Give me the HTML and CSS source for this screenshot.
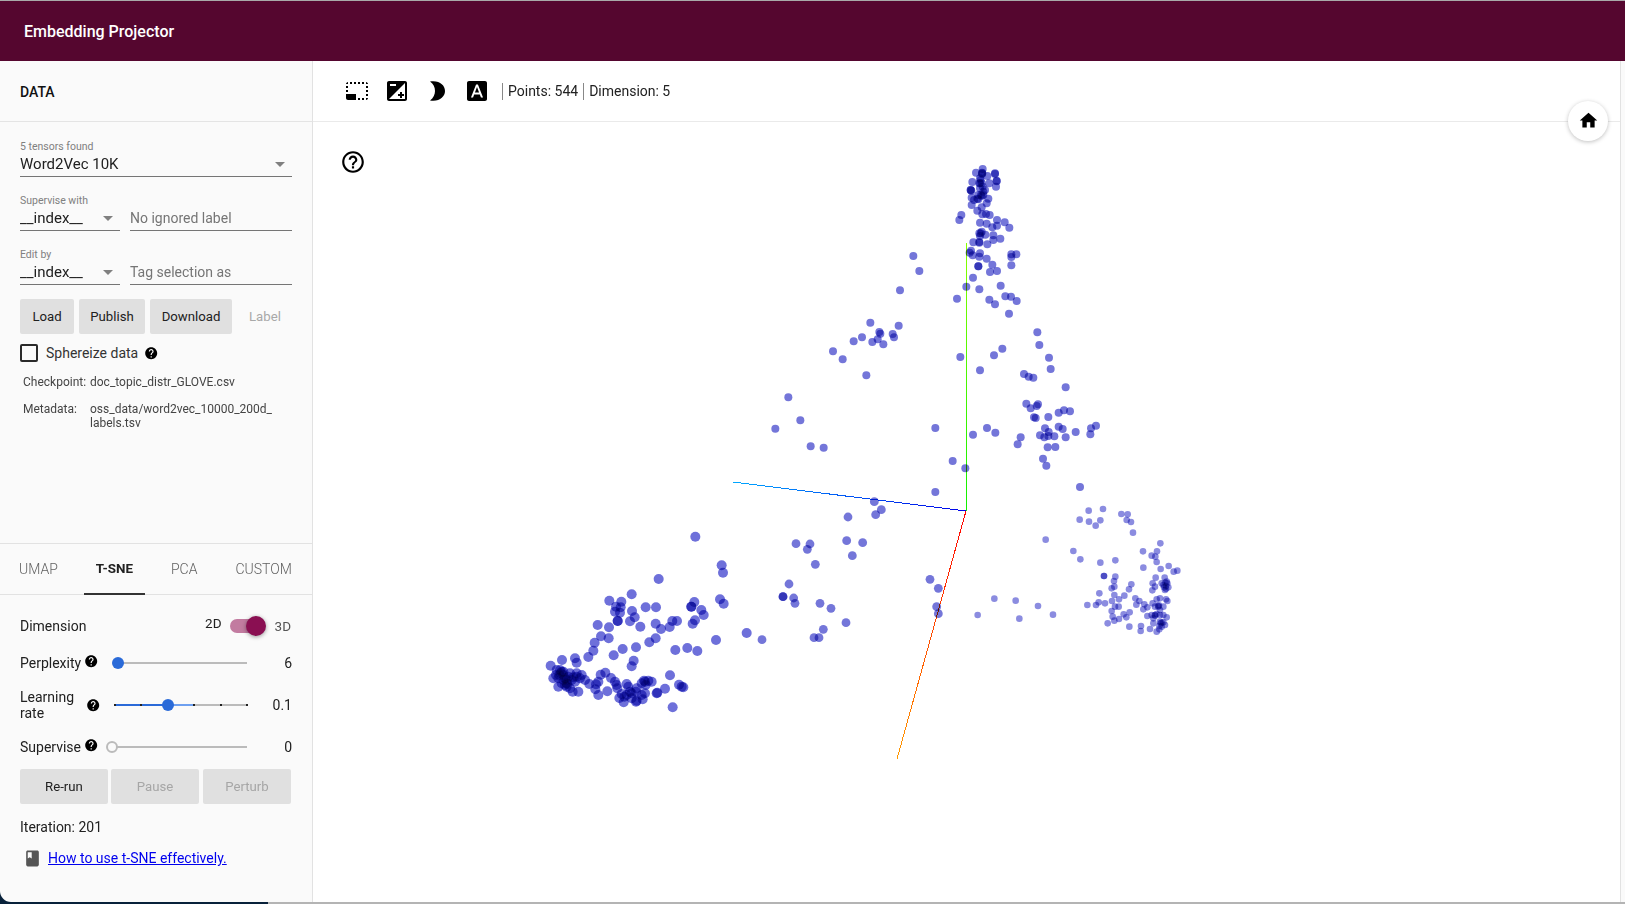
FILE: index.html
```html
<!DOCTYPE html>
<html lang="en">
<head>
<meta charset="utf-8">
<title>Embedding Projector</title>
<link rel="stylesheet" href="styles.css">
</head>
<body>
<div class="screen">
  <header class="appbar">Embedding Projector</header>
  <div class="workspace">
    <aside class="sidebar">
      <div class="data-head">DATA</div>
      <section class="data-body">
        <div class="field">
          <div class="field-label">5 tensors found</div>
          <div class="field-value">Word2Vec 10K<span class="caret"></span></div>
        </div>
        <div class="field-pair">
          <div class="field narrow">
            <div class="field-label">Supervise with</div>
            <div class="field-value">__index__<span class="caret"></span></div>
          </div>
          <div class="field wide">
            <div class="field-label">&nbsp;</div>
            <div class="field-value placeholder">No ignored label</div>
          </div>
        </div>
        <div class="field-pair">
          <div class="field narrow">
            <div class="field-label">Edit by</div>
            <div class="field-value">__index__<span class="caret"></span></div>
          </div>
          <div class="field wide">
            <div class="field-label">&nbsp;</div>
            <div class="field-value placeholder">Tag selection as</div>
          </div>
        </div>
        <div class="action-row">
          <button class="btn btn-load">Load</button>
          <button class="btn btn-publish">Publish</button>
          <button class="btn btn-download">Download</button>
          <span class="btn-flat">Label</span>
        </div>
        <div class="check-row">
          <span class="checkbox"></span>
          <span class="check-text">Sphereize data</span>
          <svg class="help help-sphere" viewBox="0 0 24 24"><path d="M12 2C6.48 2 2 6.48 2 12s4.48 10 10 10 10-4.48 10-10S17.52 2 12 2zm1 17h-2v-2h2v2zm2.07-7.75l-.9.92C13.45 12.9 13 13.5 13 15h-2v-.5c0-1.1.45-2.1 1.17-2.83l1.24-1.26c.37-.36.59-.86.59-1.41 0-1.1-.9-2-2-2s-2 .9-2 2H8c0-2.21 1.79-4 4-4s4 1.79 4 4c0 .88-.36 1.68-.93 2.25z"/></svg>
        </div>
        <div class="meta-row"><span class="meta-key">Checkpoint:</span><span class="meta-val">doc_topic_distr_GLOVE.csv</span></div>
        <div class="meta-row"><span class="meta-key">Metadata:</span><span class="meta-val">oss_data/word2vec_10000_200d_<br>labels.tsv</span></div>
      </section>
      <nav class="tabs">
        <span class="tab">UMAP</span>
        <span class="tab active">T-SNE</span>
        <span class="tab">PCA</span>
        <span class="tab">CUSTOM</span>
      </nav>
      <section class="tsne">
        <div class="row row-dimension">
          <span class="row-label">Dimension</span>
          <span class="dim-2d">2D</span>
          <span class="toggle"><span class="toggle-knob"></span></span>
          <span class="dim-3d">3D</span>
        </div>
        <div class="row row-perplexity">
          <span class="row-label slider-label">Perplexity
            <svg class="help" viewBox="0 0 24 24"><path d="M12 2C6.48 2 2 6.48 2 12s4.48 10 10 10 10-4.48 10-10S17.52 2 12 2zm1 17h-2v-2h2v2zm2.07-7.75l-.9.92C13.45 12.9 13 13.5 13 15h-2v-.5c0-1.1.45-2.1 1.17-2.83l1.24-1.26c.37-.36.59-.86.59-1.41 0-1.1-.9-2-2-2s-2 .9-2 2H8c0-2.21 1.79-4 4-4s4 1.79 4 4c0 .88-.36 1.68-.93 2.25z"/></svg>
          </span>
          <span class="slider"><span class="thumb thumb-perplexity"></span></span>
          <span class="row-value">6</span>
        </div>
        <div class="row row-learning">
          <span class="row-label slider-label"><span class="two-line">Learning rate</span>
            <svg class="help" viewBox="0 0 24 24"><path d="M12 2C6.48 2 2 6.48 2 12s4.48 10 10 10 10-4.48 10-10S17.52 2 12 2zm1 17h-2v-2h2v2zm2.07-7.75l-.9.92C13.45 12.9 13 13.5 13 15h-2v-.5c0-1.1.45-2.1 1.17-2.83l1.24-1.26c.37-.36.59-.86.59-1.41 0-1.1-.9-2-2-2s-2 .9-2 2H8c0-2.21 1.79-4 4-4s4 1.79 4 4c0 .88-.36 1.68-.93 2.25z"/></svg>
          </span>
          <span class="slider slider-steps">
            <span class="fill-dark"></span><span class="fill-light"></span>
            <span class="ticks"><i></i><i></i><i></i><i></i><i></i><i></i></span>
            <span class="thumb thumb-learning"></span>
          </span>
          <span class="row-value value-learning">0.1</span>
        </div>
        <div class="row row-supervise">
          <span class="row-label slider-label">Supervise
            <svg class="help" viewBox="0 0 24 24"><path d="M12 2C6.48 2 2 6.48 2 12s4.48 10 10 10 10-4.48 10-10S17.52 2 12 2zm1 17h-2v-2h2v2zm2.07-7.75l-.9.92C13.45 12.9 13 13.5 13 15h-2v-.5c0-1.1.45-2.1 1.17-2.83l1.24-1.26c.37-.36.59-.86.59-1.41 0-1.1-.9-2-2-2s-2 .9-2 2H8c0-2.21 1.79-4 4-4s4 1.79 4 4c0 .88-.36 1.68-.93 2.25z"/></svg>
          </span>
          <span class="slider"><span class="thumb thumb-zero"></span></span>
          <span class="row-value">0</span>
        </div>
        <div class="run-row">
          <button class="btn btn-run">Re-run</button>
          <button class="btn btn-run disabled">Pause</button>
          <button class="btn btn-run disabled">Perturb</button>
        </div>
        <div class="iteration">Iteration: 201</div>
        <div class="howto">
          <svg class="book" viewBox="0 0 24 24"><path d="M18 2H6c-1.1 0-2 .9-2 2v16c0 1.1.9 2 2 2h12c1.1 0 2-.9 2-2V4c0-1.1-.9-2-2-2zM6 4h5v8l-2.5-1.5L6 12V4z"/></svg>
          <a href="#">How to use t-SNE effectively.</a>
        </div>
      </section>
    </aside>
    <main class="stage">
      <div class="toolbar">
        <svg class="tool" viewBox="0 0 24 24"><path d="M23 15h-2v2h2v-2zm0-4h-2v2h2v-2zm0 8h-2v2c1 0 2-1 2-2zM15 3h-2v2h2V3zm8 4h-2v2h2V7zm-2-4v2h2c0-1-1-2-2-2zM3 21h8v-6H1v4c0 1.1.9 2 2 2zM3 7H1v2h2V7zm12 12h-2v2h2v-2zm4-16h-2v2h2V3zm0 16h-2v2h2v-2zM3 3C2 3 1 4 1 5h2V3zm0 8H1v2h2v-2zm8-8H9v2h2V3zM7 3H5v2h2V3z"/></svg>
        <svg class="tool" viewBox="0 0 24 24"><path d="M15 17v2h2v-2h2v-2h-2v-2h-2v2h-2v2h2zm5-15H4c-1.1 0-2 .9-2 2v16c0 1.1.9 2 2 2h16c1.1 0 2-.9 2-2V4c0-1.1-.9-2-2-2zM5 5h6v2H5V5zm15 15H4L20 4v16z"/></svg>
        <svg class="tool" viewBox="0 0 24 24"><path d="M5 2.6C14 1 20 6 20 12C20 18 14 23 5 21.4C8.5 19 10 15.5 10 12C10 8.5 8.5 5 5 2.6Z"/></svg>
        <svg class="tool" viewBox="0 0 24 24"><path d="M9.93 13.5h4.14L12 7.98zM20 2H4c-1.1 0-2 .9-2 2v16c0 1.1.9 2 2 2h16c1.1 0 2-.9 2-2V4c0-1.1-.9-2-2-2zm-4.05 16.5l-1.14-3H9.17l-1.12 3H5.96l5.11-13h1.86l5.11 13h-2.09z"/></svg>
        <span class="stat stat-first">Points: 544</span>
        <span class="stat">Dimension: 5</span>
      </div>
      <svg class="help-outline" viewBox="0 0 24 24"><path d="M11 18h2v-2h-2v2zm1-16C6.48 2 2 6.48 2 12s4.48 10 10 10 10-4.48 10-10S17.52 2 12 2zm0 18c-4.41 0-8-3.59-8-8s3.59-8 8-8 8 3.59 8 8-3.59 8-8 8zm0-14c-2.21 0-4 1.79-4 4h2c0-1.1.9-2 2-2s2 .9 2 2c0 2-3 1.75-3 5h2c0-2.25 3-2.5 3-5 0-2.21-1.79-4-4-4z"/></svg>
      <button class="home"><svg viewBox="0 0 24 24"><path d="M10 20v-6h4v6h5v-8h3L12 3 2 12h3v8z"/></svg></button>
      <svg id="scatter" class="scatter" viewBox="313 61 1307 841" width="1307" height="841">
        <defs>
          <linearGradient id="axis-y" gradientUnits="userSpaceOnUse" x1="966" y1="511" x2="966" y2="243"><stop offset="0" stop-color="#10f000"/><stop offset="1" stop-color="#88ff00"/></linearGradient>
          <linearGradient id="axis-z" gradientUnits="userSpaceOnUse" x1="966" y1="511" x2="733" y2="482"><stop offset="0" stop-color="#0000e8"/><stop offset="1" stop-color="#00a8ff"/></linearGradient>
          <linearGradient id="axis-x" gradientUnits="userSpaceOnUse" x1="966" y1="511" x2="897" y2="759"><stop offset="0" stop-color="#ff0000"/><stop offset="1" stop-color="#ff9a00"/></linearGradient>
        </defs>
        <line class="axis" x1="966.5" y1="511" x2="966.5" y2="243" stroke="url(#axis-y)"/>
        <line class="axis" x1="966" y1="511" x2="733" y2="482" stroke="url(#axis-z)"/>
        <line class="axis" x1="966" y1="511" x2="897" y2="759" stroke="url(#axis-x)"/>
      </svg>
    </main>
    <div class="rail"></div>
  </div>
  <div class="bottom-strip"><span class="strip-dark"></span><span class="strip-grey"></span></div>
</div>
<script src="scatter.js"></script>
</body>
</html>
```
FILE: styles.css
```css
* { box-sizing: border-box; }
html, body { margin: 0; padding: 0; }
body {
  width: 1625px;
  height: 904px;
  overflow: hidden;
  background: #fff;
  font-family: Roboto, "Liberation Sans", sans-serif;
  color: #212121;
}
.screen { display: flex; flex-direction: column; height: 904px; border-top: 1px solid #a9a9a9; }
.appbar {
  height: 60px;
  flex: none;
  background: #55062f;
  color: #fff;
  font-size: 16px;
  font-weight: 500;
  line-height: 62px;
  padding-left: 24px;
}
.workspace { display: flex; height: 841px; flex: none; position: relative; z-index: 1; }
.sidebar {
  width: 313px;
  flex: none;
  display: flex;
  flex-direction: column;
  background: #fafafa;
  border-right: 1px solid #e2e2e2;
  border-bottom-left-radius: 11px;
}
.data-head {
  height: 61px;
  flex: none;
  border-bottom: 1px solid #e4e4e4;
  padding-left: 20px;
  font-size: 14px;
  font-weight: 500;
  color: #111;
  line-height: 62px;
}
.data-body { flex: 1; padding: 18px 20px 0; display: flex; flex-direction: column; }
.field { display: block; margin-bottom: 17px; }
.field-pair { display: flex; gap: 10px; }
.narrow { width: 100px; flex: none; }
.wide { flex: 1; }
.field-label { height: 14px; font-size: 10.5px; line-height: 14px; color: #808080; }
.field-value {
  position: relative;
  height: 23px;
  line-height: 20px;
  font-size: 15px;
  color: #212121;
  border-bottom: 1px solid #757575;
}
.placeholder { font-size: 14px; color: #757575; line-height: 20px; }
.caret {
  position: absolute;
  right: 7px;
  top: 8px;
  border-left: 5px solid transparent;
  border-right: 5px solid transparent;
  border-top: 5px solid #808080;
}
.action-row { display: flex; align-items: center; margin-top: -3px; }
.btn {
  height: 35px;
  border: 0;
  border-radius: 2px;
  background: #e0e0e0;
  color: #212121;
  font-family: inherit;
  font-size: 13.2px;
  padding: 0;
}
.btn-load { width: 54px; margin-right: 5px; }
.btn-publish { width: 66px; margin-right: 5px; }
.btn-download { width: 82px; }
.btn-flat { margin-left: 17px; font-size: 13.2px; color: #a8a8a8; }
.check-row { display: flex; align-items: center; height: 18px; margin-top: 10px; }
.checkbox { width: 18px; height: 18px; border: 2px solid #2a2a2a; border-radius: 2px; flex: none; }
.check-text { margin-left: 8px; font-size: 14px; color: #333; }
.help { width: 14.4px; height: 14.4px; fill: #000; flex: none; }
.help-sphere { margin-left: 6px; }
.meta-row { display: flex; margin: 13px 0 0 3px; font-size: 12px; line-height: 14px; color: #444; }
.meta-key { width: 67px; flex: none; }
.tabs {
  height: 52px;
  flex: none;
  display: flex;
  gap: 38px;
  align-items: center;
  padding-left: 19px;
  border-top: 1px solid #e2e2e2;
  border-bottom: 1px solid #e2e2e2;
  font-size: 14px;
  font-weight: 300;
  color: #616161;
}
.tab { position: relative; line-height: 50px; height: 50px; }
.tab.active { font-weight: 700; color: #212121; font-size: 13.4px; margin-left: 0; }
.tab.active::after {
  content: "";
  position: absolute;
  left: -12px;
  right: -12px;
  bottom: -1px;
  height: 2px;
  background: #333;
}
.tsne { padding: 21px 20px 0; flex: none; height: 307px; }
.row { display: flex; align-items: center; font-size: 14px; }
.row-dimension { height: 20px; padding-right: 1px; }
.row-label { flex: none; }
.dim-2d { margin-left: auto; margin-top: -6px; font-size: 13.5px; }
.toggle {
  position: relative;
  width: 32px;
  height: 14px;
  margin-left: 8px;
  background: #c27ba0;
  border-radius: 7px;
}
.toggle-knob {
  position: absolute;
  right: -4px;
  top: -3px;
  width: 20px;
  height: 20px;
  border-radius: 50%;
  background: #8a0f52;
  box-shadow: 0 1px 4px rgba(0,0,0,.4);
}
.dim-3d { margin-left: 13px; font-size: 13.5px; color: #555; }
.row-perplexity { height: 20px; margin-top: 17px; }
.row-learning { height: 32px; margin-top: 16px; line-height: 15.5px; }
.row-supervise { height: 20px; margin-top: 16px; }
.slider-label { width: 92px; display: flex; align-items: center; gap: 3px; }
.slider-label .help { margin-top: -3px; }
.two-line { width: 62px; flex: none; padding-top: 1px; margin-right: 1px; }
.slider { position: relative; width: 135px; height: 2px; background: #bbb; flex: none; }
.slider-steps { margin-left: 2px; width: 134px; }
.row-perplexity .slider { width: 129px; margin-left: 6px; }
.row-learning .help { margin: 0; }
.row-value { margin-left: auto; font-size: 14px; }
.value-learning { padding-top: 1px; }
.thumb { position: absolute; top: -5px; width: 12px; height: 12px; border-radius: 50%; background: #2a6ad8; }
.thumb-perplexity { left: -6px; }
.thumb-learning { left: 48px; }
.thumb-zero {
  left: -6px;
  background: #fafafa;
  border: 2px solid #bbb;
}
.fill-dark { position: absolute; left: 0; top: 0; width: 54px; height: 2px; background: #2a6ad8; }
.fill-light { position: absolute; left: 54px; top: 0; width: 26px; height: 2px; background: #6ea0f0; }
.ticks { position: absolute; inset: 0; display: flex; justify-content: space-between; }
.ticks i { display: block; width: 2px; height: 2px; background: #222; }
.run-row { display: flex; margin-top: 12px; gap: 3px; }
.btn-run { width: 88px; }
.btn-run:last-child { margin-left: 1px; }
.btn-run.disabled { color: #a6a6a6; }
.iteration { margin-top: 13px; height: 20px; line-height: 20px; font-size: 14px; }
.howto { display: flex; align-items: center; height: 20px; margin-top: 11px; padding-left: 3px; gap: 6px; }
.book { width: 19px; height: 19px; fill: #555; flex: none; }
.howto a { color: #0000ee; font-size: 14px; }
.stage { flex: 1; position: relative; background: #fff; }
.toolbar {
  height: 61px;
  display: flex;
  align-items: center;
  padding-left: 32px;
  border-bottom: 1px solid #eaeaea;
}
.tool { width: 24px; height: 24px; fill: #000; margin-right: 16px; flex: none; }
.stat { font-size: 14px; color: #212121; border-left: 1px solid #888; line-height: 17px; padding: 0 5px; }
.stat-first { margin-left: -3px; }
.help-outline { position: absolute; left: 27px; top: 88px; width: 26px; height: 26px; fill: #000; }
.home {
  position: absolute;
  left: 1255px;
  top: 40px;
  width: 40px;
  height: 40px;
  padding: 0 0 2px;
  border: 0;
  border-radius: 50%;
  background: #fff;
  box-shadow: 0 1px 4px rgba(0,0,0,.25);
  display: flex;
  align-items: center;
  justify-content: center;
  z-index: 2;
}
.home svg { width: 21px; height: 21px; fill: #000; }
.scatter { position: absolute; left: 0; top: 0; pointer-events: none; }
.axis { stroke-width: 1; fill: none; shape-rendering: crispEdges; }
.point { mix-blend-mode: multiply; }
.tone-near { fill: #6e70da; }
.tone-mid { fill: #7476d9; }
.tone-far { fill: #8b8ce0; }
.rail { width: 5px; flex: none; background: #fafafa; border-left: 1px solid #e2e2e2; }
.bottom-strip { display: flex; height: 14px; margin-top: -12px; flex: none; }
.strip-dark { width: 268px; background: #08213a; }
.strip-grey { flex: 1; background: #b4b4b4; }
```
FILE: scatter.js
```js
// Projected points, grouped by the region of the plot they fall into.
// Each group: origin, scale divisor 3, radius and tone.
var groups = [
  { ox: 900, oy: 150, r: 4, tone: 'tone-mid', pts: [
    [248,57],[228,68],[247,70],[285,70],[285,72],[240,85],[242,90],[262,78],[290,94],[290,92],[217,96],[245,100],[240,100],[268,100],[288,110],[212,120],[212,120],[214,122],[240,115],[255,120],[250,125],[215,143],[250,135],[235,148],[232,146],[265,146],[243,135],[245,138],[260,160],[215,165],[245,172],[232,182],[247,193],[258,192],[269,195],[184,195],[178,210],[240,218],[260,221],[291,210],[314,217],[328,233],[277,232],[291,227],[245,245],[238,250],[240,258],[242,250],[256,254],[280,256],[280,270],[301,266],[238,278],[238,276],[220,277],[262,283],[213,302],[209,308],[240,310],[238,320],[218,316],[260,326],[334,313],[349,313],[334,321],[235,349],[235,349],[334,346],[277,344],[270,366],[291,363],[219,383],[199,410],[238,418],[302,407],[316,439],[333,440],[350,453],[268,449],[285,463],[171,446],[327,491],[412,547],[40,318],[58,363],[0,421],[238,100],[246,72],[235,135],[222,150],[246,68],[248,110]
  ]},
  { ox: 760, oy: 300, r: 4, tone: 'tone-mid', pts: [
    [867,173],[872,207],[838,135],[727,146],[702,166],[601,171],[660,211],[792,222],[806,230],[820,233],[917,262],[331,68],[416,77],[358,96],[361,101],[398,102],[402,112],[306,112],[281,124],[337,126],[353,118],[370,133],[219,154],[248,178],[319,226],[85,292],[121,361],[46,386],[152,439],[191,443],[526,384],[578,483],[616,505],[526,576],[639,404],[681,384],[706,398],[782,412],[773,433],[799,311],[812,325],[830,318],[834,313],[822,352],[827,354],[865,351],[896,338],[912,331],[930,334],[855,385],[866,396],[896,380],[908,387],[840,406],[853,412],[865,408],[883,409],[917,412],[947,396],[993,385],[1008,377],[991,403],[863,442],[886,441],[849,476],[859,497],[960,561]
  ]},
  { ox: 720, oy: 470, r: 4.4, tone: 'tone-mid', pts: [
    [463,95],[484,119],[467,134],[384,141],[228,221],[270,222],[262,238],[380,212],[428,218],[397,257],[286,283],[207,342],[189,380],[189,380],[221,384],[225,400],[300,400],[333,415],[378,458],[310,478],[126,509],[282,503],[297,503],[630,328],[655,355],[650,410],[655,431]
  ]},
  { ox: 720, oy: 470, r: 3.3, tone: 'tone-far', pts: [
    [823,386],[887,392],[954,408],[999,434],[773,435],[898,446],[977,209]
  ]},
  { ox: 530, oy: 560, r: 5, tone: 'tone-near', pts: [
    [496,-70],[575,16],[579,38],[386,57],[570,118],[581,131],[305,103],[238,122],[274,125],[258,140],[272,142],[255,155],[270,158],[263,183],[263,183],[347,142],[378,142],[306,153],[484,140],[484,140],[493,126],[514,150],[521,165],[650,219],[495,181],[488,191],[314,172],[300,184],[203,195],[237,202],[331,200],[377,191],[393,207],[419,201],[427,183],[441,183],[213,229],[236,235],[194,248],[377,235],[358,247],[558,240],[318,262],[278,267],[436,270],[472,264],[502,273],[190,272],[175,291],[251,286],[135,295],[96,300],[140,308],[62,317],[311,302],[305,319],
    [90,330],[100,335],[78,345],[85,355],[70,355],[120,340],[140,340],[150,355],[135,365],[110,360],[95,370],[110,380],[120,385],[85,380],[100,345],[125,360],[145,395],[165,360],[155,345],[128,395],[110,370],[80,330],[92,340],[105,355],[140,350],[112,372],[88,345],[100,360],[115,350],[105,375],[95,335],[130,352],
    [226,338],[212,344],[420,346],[243,354],[255,365],[260,375],[178,372],[205,365],[198,373],[196,388],[205,405],[232,394],[262,385],[290,372],[295,380],[345,365],[335,370],[355,362],[365,365],[347,375],[405,386],[447,374],[455,380],[460,382],[380,400],[382,398],[275,402],[268,414],[281,427],[300,395],[305,400],[290,405],[318,395],[305,415],[320,422],[338,418],[345,400],[335,405],[320,385],[428,442],[283,410],[342,362],[318,425]
  ]},
  { ox: 1060, oy: 500, r: 3.3, tone: 'tone-far', pts: [
    [86,32],[129,27],[184,42],[203,43],[59,59],[87,65],[121,61],[107,77],[200,60],[213,66],[219,98],[301,130],[40,153],[249,154],[291,154],[275,167],[286,170],[290,186],[61,178],[121,188],[166,181],[326,198],[302,207],[250,203],[341,215],[352,212],[287,233],[314,233],[132,228],[132,228],[166,230],[162,243],
    [320,245],[310,255],[325,262],[315,270],[305,250],[318,258],[312,262],[322,250],[316,248],[318,266],[278,250],[285,260],[277,271],[214,253],[163,260],[155,265],[207,268],[118,280],[193,287],[163,285],[177,298],[156,303],[226,295],[238,303],[229,314],[253,313],[262,322],[250,328],[116,307],[135,310],[82,315],[108,315],[176,320],[165,320],[155,333],[158,350],[163,362],[177,357],[209,337],[191,343],[199,352],[143,370],[208,380],[243,378],[242,393],
    [290,298],[300,295],[318,298],[322,303],[278,310],[295,318],[310,320],[285,320],[300,330],[300,345],[285,345],[275,345],[262,348],[280,355],[310,345],[320,352],[300,365],[310,367],[315,375],[280,370],[298,378],[305,380],[270,387],[298,388],[290,395],[295,320],[285,347],[305,368],[297,316],[290,342],[302,370]
  ]}
];

var svg = document.getElementById('scatter');
groups.forEach(function (group) {
  group.pts.forEach(function (p) {
    var c = document.createElementNS('http://www.w3.org/2000/svg', 'circle');
    c.setAttribute('cx', group.ox + p[0] / 3);
    c.setAttribute('cy', group.oy + p[1] / 3);
    c.setAttribute('r', group.r);
    c.setAttribute('class', 'point ' + group.tone);
    svg.appendChild(c);
  });
});
```
